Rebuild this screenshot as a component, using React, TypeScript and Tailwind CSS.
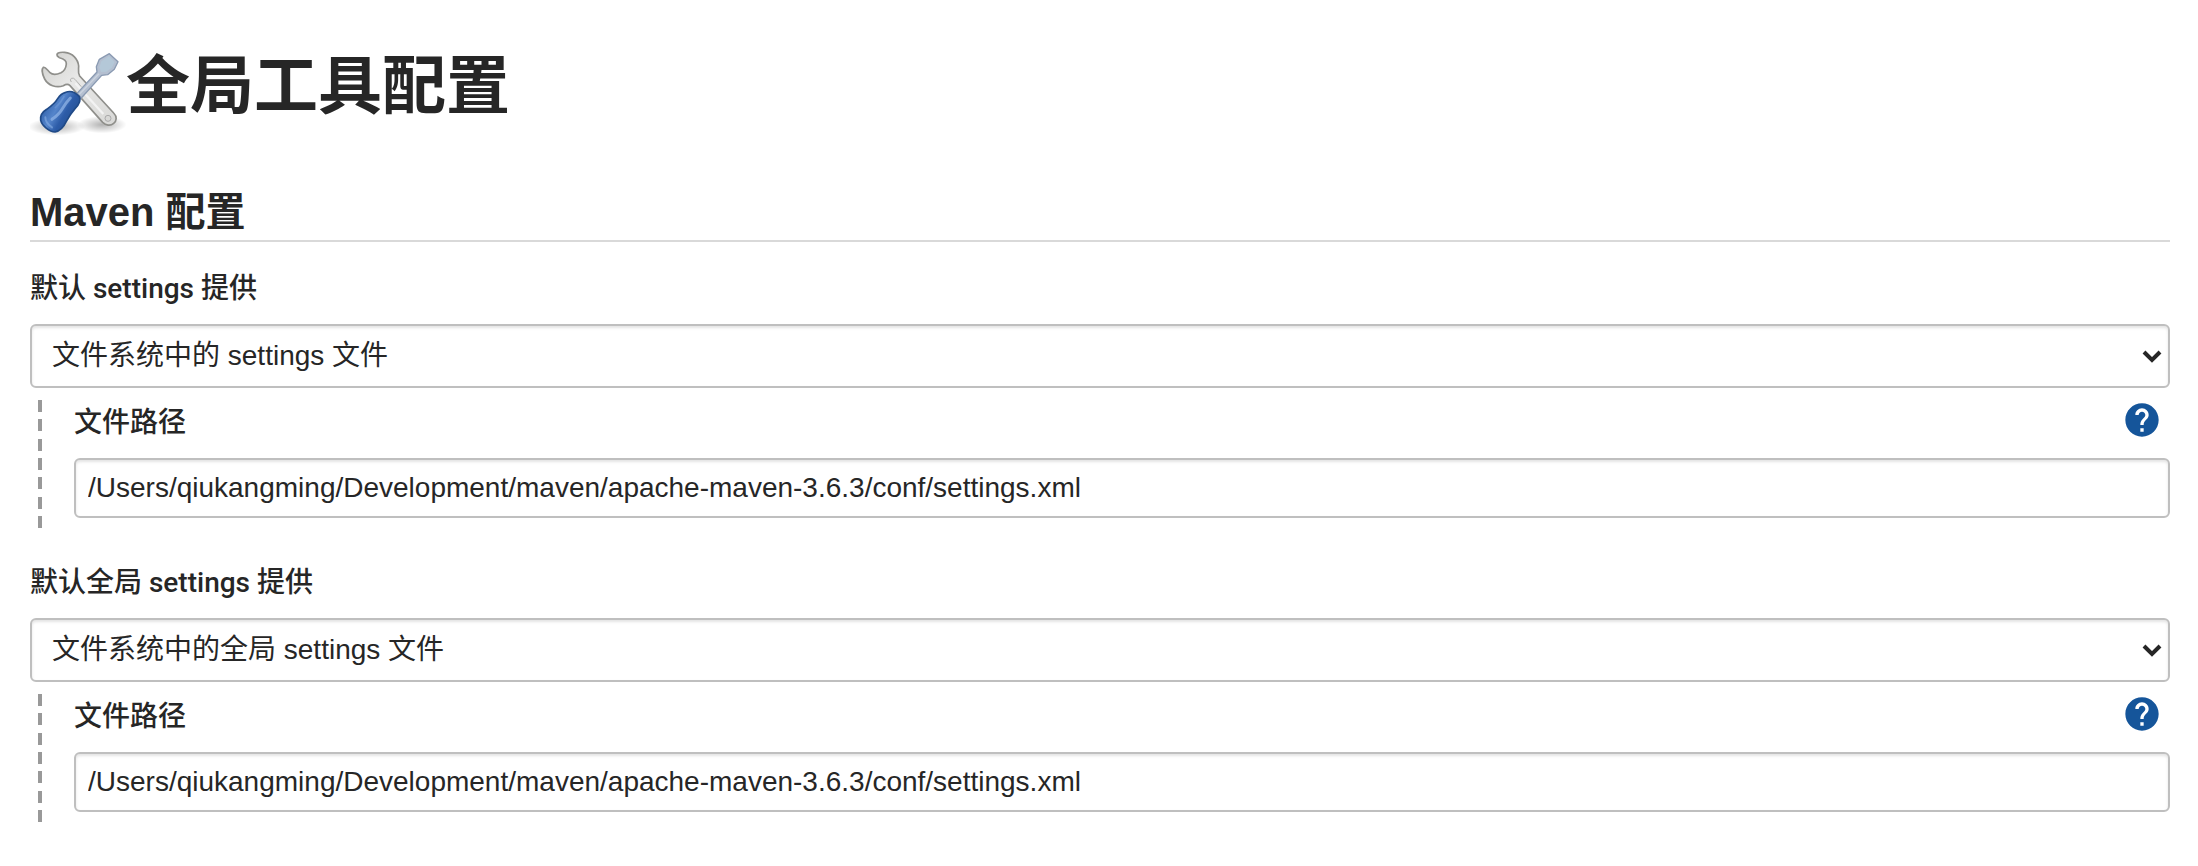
import { useId, useState } from 'react';
import { MdHelp } from 'react-icons/md';

interface SettingsProviderProps {
  label: string;
  option: string;
  defaultPath: string;
}

const SETTINGS_PATH = '/Users/qiukangming/Development/maven/apache-maven-3.6.3/conf/settings.xml';

const providers: SettingsProviderProps[] = [
  { label: '默认 settings 提供', option: '文件系统中的 settings 文件', defaultPath: SETTINGS_PATH },
  { label: '默认全局 settings 提供', option: '文件系统中的全局 settings 文件', defaultPath: SETTINGS_PATH },
];

export default function App() {
  return (
    <main className="min-h-screen bg-white pt-11 pr-7 pb-6 pl-[30px] text-[28px] text-[#262626] font-['Liberation_Sans','Noto_Sans_CJK_SC',sans-serif]">
      <h1 className="flex items-start text-[64px] leading-[84px] font-bold">
        <ToolsIcon />
        全局工具配置
      </h1>

      <section className="mt-11">
        <h2 className="mb-[26px] border-b-2 border-[#d9d9d9] text-[40px] leading-[56px] font-bold">
          Maven 配置
        </h2>
        <div className="flex flex-col gap-[34px]">
          {providers.map((provider) => (
            <SettingsProvider key={provider.label} {...provider} />
          ))}
        </div>
      </section>
    </main>
  );
}

function SettingsProvider({ label, option, defaultPath }: SettingsProviderProps) {
  const id = useId();
  const [path, setPath] = useState(defaultPath);

  return (
    <div>
      <label
        htmlFor={`${id}-provider`}
        className="mb-3.5 block leading-[42px] font-medium font-['Roboto','Noto_Sans_CJK_SC',sans-serif]"
      >
        {label}
      </label>
      <div className="relative">
        <select
          id={`${id}-provider`}
          className="block h-16 w-full appearance-none rounded-md border-2 border-[#bfbfbf] bg-white px-5 shadow-[inset_0_2px_3px_#e4e4e4]"
        >
          <option>{option}</option>
        </select>
        <svg
          className="pointer-events-none absolute top-6 right-2 h-4 w-5"
          viewBox="0 0 20 16"
          fill="none"
          stroke="#262626"
          strokeWidth="4"
        >
          <path d="M2 4 L10 12 L18 4" />
        </svg>
      </div>

      {/* nested fields */}
      <div className="mt-3 flex pl-2">
        <div className="flex h-32 w-1 flex-col justify-between">
          {Array.from({ length: 7 }, (_, i) => (
            <span key={i} className="h-3 bg-[#999]" />
          ))}
        </div>
        <div className="ml-8 flex-1">
          <div className="flex h-[58px] items-start justify-between pr-2">
            <label htmlFor={`${id}-path`} className="leading-[46px] font-medium">
              文件路径
            </label>
            <button type="button" aria-label="帮助" className="text-[#15559a]">
              <MdHelp size={40} />
            </button>
          </div>
          <input
            id={`${id}-path`}
            type="text"
            value={path}
            onChange={(e) => setPath(e.target.value)}
            className="block h-[60px] w-full rounded-md border-2 border-[#bfbfbf] bg-white px-3 shadow-[inset_0_2px_3px_#e4e4e4]"
          />
        </div>
      </div>
    </div>
  );
}

function ToolsIcon() {
  return (
    <svg className="h-24 w-24 shrink-0" viewBox="30 12 288 288" fill="none">
      <defs>
        <radialGradient id="ground">
          <stop offset="0" stopColor="#000" stopOpacity="0.3" />
          <stop offset="1" stopColor="#000" stopOpacity="0" />
        </radialGradient>
        <linearGradient id="steel" x1="0" y1="0" x2="1" y2="1">
          <stop offset="0" stopColor="#cfcfcc" />
          <stop offset="0.4" stopColor="#e8e8e7" />
          <stop offset="1" stopColor="#d9d9d7" />
        </linearGradient>
        <linearGradient id="handle" x1="0" y1="0.2" x2="1" y2="0.8">
          <stop offset="0.1" stopColor="#2f5fa8" />
          <stop offset="0.4" stopColor="#5585cb" />
          <stop offset="0.6" stopColor="#2d5ca8" />
          <stop offset="1" stopColor="#204a87" />
        </linearGradient>
      </defs>
      <ellipse cx="110" cy="260" rx="86" ry="26" fill="url(#ground)" />
      <ellipse cx="246" cy="254" rx="74" ry="26" fill="url(#ground)" />

      {/* wrench */}
      <path
        d="M112 48 C108 39 116 36 134 37 C158 39 174 57 176 78 C176 89 173 98 179 108 L281 219 C292 230 290 243 281 250 C271 259 257 256 248 247 L150 137 C144 131 137 133 130 137 C109 145 84 136 74 117 C67 103 64 87 70 82 C76 79 82 91 90 98 C99 106 112 103 123 98 C133 93 138 83 139 72 C140 58 126 55 118 53 Z"
        fill="url(#steel)"
        stroke="#8f8f8b"
        strokeWidth="5"
        strokeLinejoin="round"
      />
      <path d="M154 126 Q148 119 154 115 Q160 112 166 119 L184 140" stroke="#b4b4b2" strokeWidth="3" />
      <path d="M166 130 L250 222" stroke="#f3f3f3" strokeWidth="7" />
      <circle cx="264" cy="235" r="9" fill="#d8d8d6" stroke="#aaa" strokeWidth="3" />

      {/* screwdriver */}
      <path
        d="M171 160 L231 96 L229 80 L238 58 L268 41 L294 65 L283 88 L263 104 L245 106 L184 174 Z"
        fill="#b4bfd0"
        stroke="#8a9ab2"
        strokeWidth="4"
        strokeLinejoin="round"
      />
      <path d="M238 82 L244 64 L267 49 L284 66 L275 83 L259 95 L243 96 Z" fill="#b4c8d8" />
      <path d="M178 163 L237 101" stroke="#cbd3df" strokeWidth="4" />
      <path
        d="M137 157 C151 151 166 157 178 170 C184 182 177 194 165 206 C153 220 147 229 139 244 C131 261 119 273 105 276 C88 276 66 257 62 241 C60 226 67 216 80 208 C96 197 106 188 113 176 C120 165 126 160 137 157 Z"
        fill="url(#handle)"
        stroke="#204a87"
        strokeWidth="5"
      />
      <path
        d="M151 174 Q136 190 127 206 Q118 222 96 238"
        stroke="#8fb3e6"
        strokeWidth="9"
        strokeLinecap="round"
        opacity="0.75"
      />
      <path d="M132 170 Q122 190 106 203" stroke="#6b95d4" strokeWidth="5" strokeLinecap="round" opacity="0.7" />
      <path d="M76 232 Q76 249 96 262" stroke="#7fa6de" strokeWidth="6" strokeLinecap="round" opacity="0.7" />
    </svg>
  );
}
